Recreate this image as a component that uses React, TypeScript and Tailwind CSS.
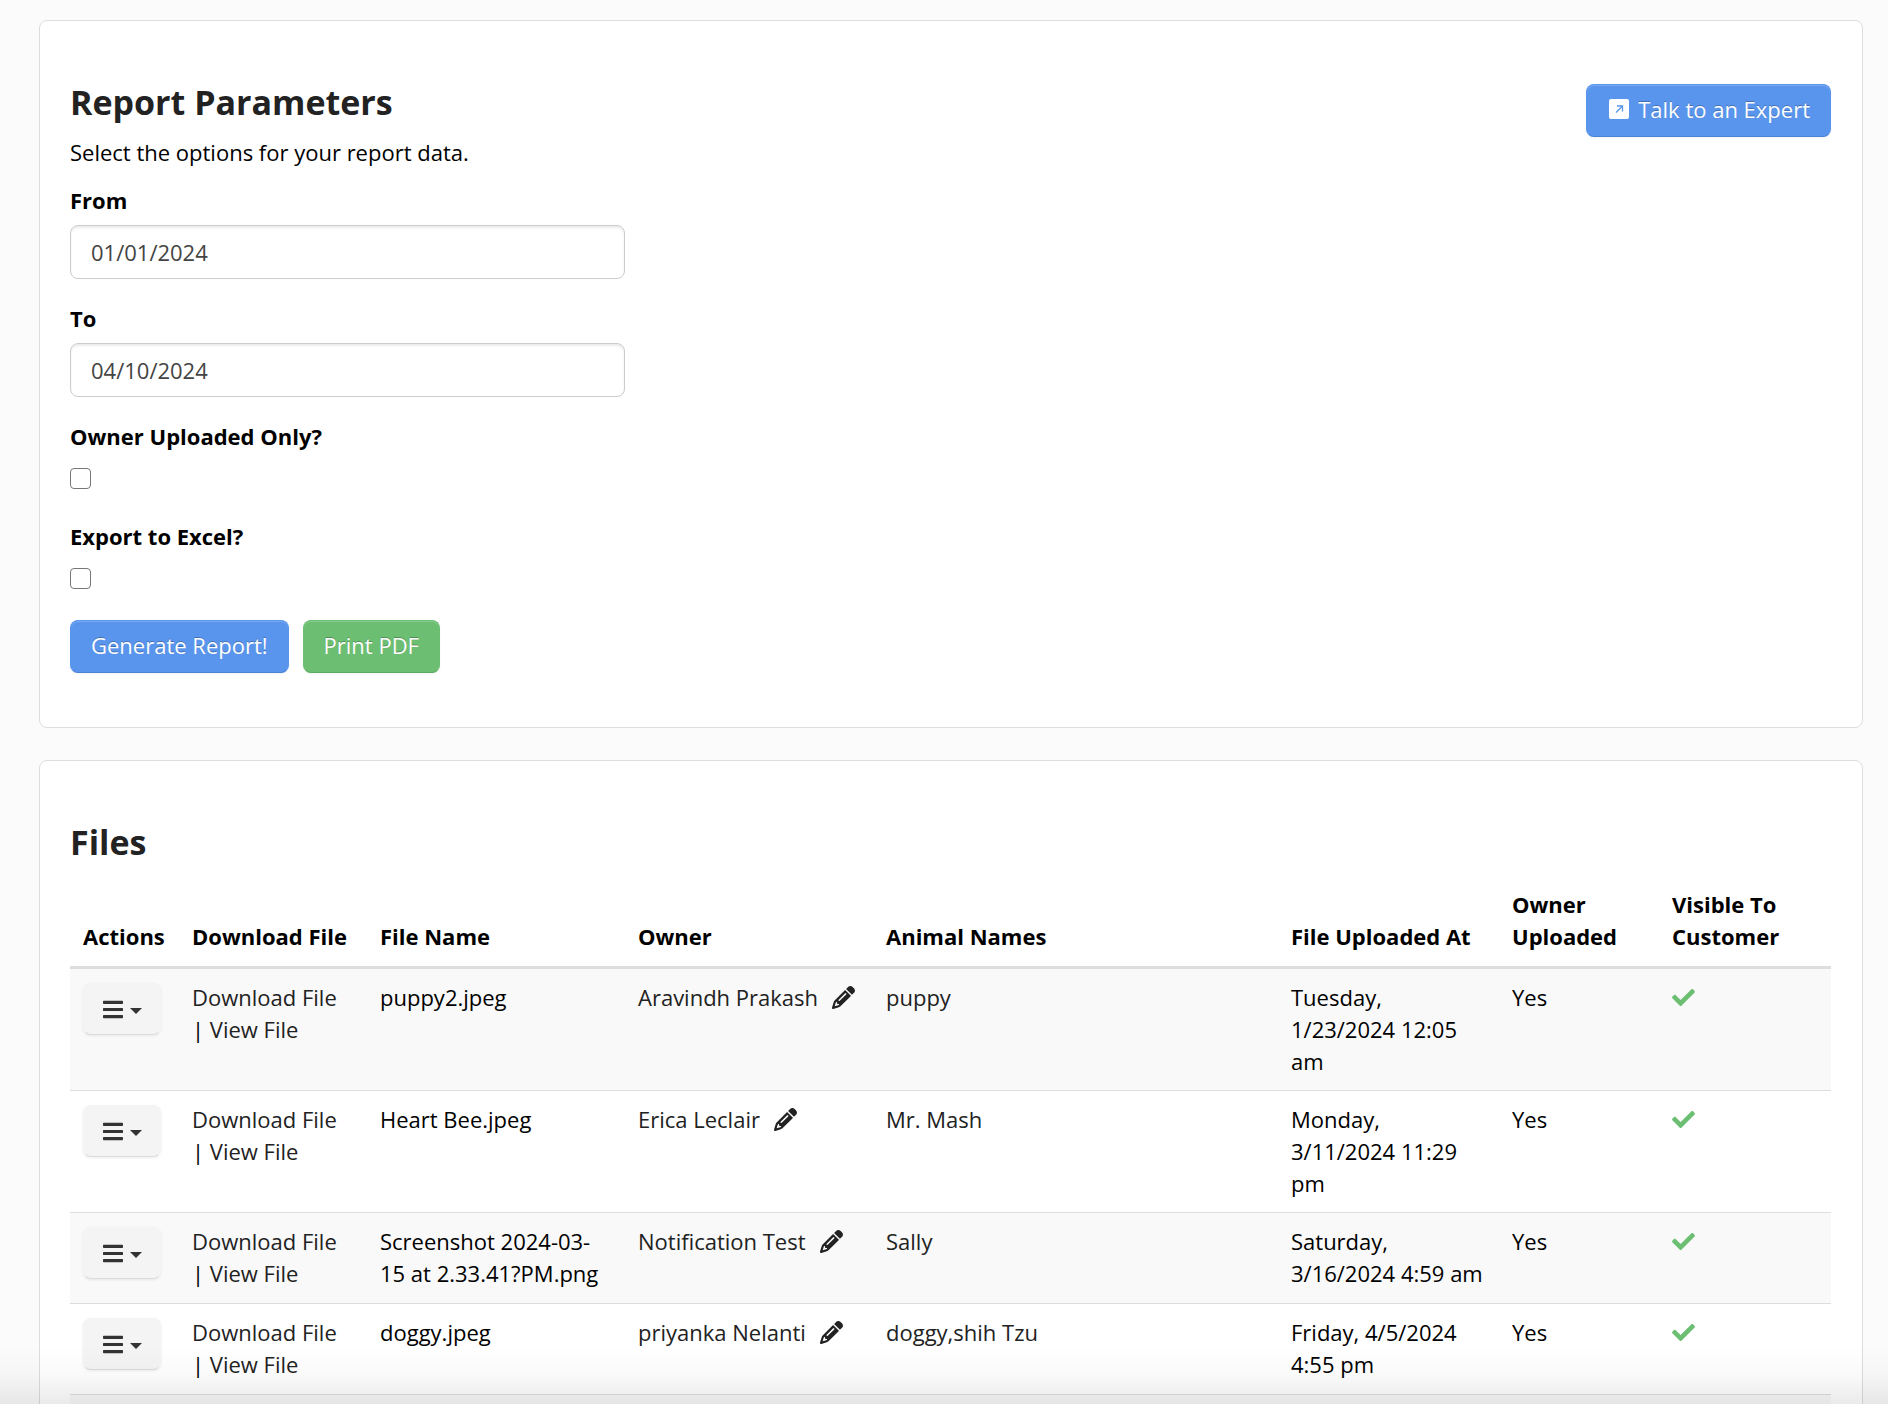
import React, { useState } from "react";
import { FaBars, FaCheck } from "react-icons/fa";
import { FaPencil } from "react-icons/fa6";

interface FileRow {
    name: string;
    owner: string;
    animals: string;
    uploadedAt: string;
    ownerUploaded: boolean;
}

const files: FileRow[] = [
    { name: "puppy2.jpeg", owner: "Aravindh Prakash", animals: "puppy", uploadedAt: "Tuesday, 1/23/2024 12:05 am", ownerUploaded: true },
    { name: "Heart Bee.jpeg", owner: "Erica Leclair", animals: "Mr. Mash", uploadedAt: "Monday, 3/11/2024 11:29 pm", ownerUploaded: true },
    { name: "Screenshot 2024-03-15 at 2.33.41?PM.png", owner: "Notification Test", animals: "Sally", uploadedAt: "Saturday, 3/16/2024 4:59 am", ownerUploaded: true },
    { name: "doggy.jpeg", owner: "priyanka Nelanti", animals: "doggy,shih Tzu", uploadedAt: "Friday, 4/5/2024 4:55 pm", ownerUploaded: true },
];

const cardClass = "rounded-lg border border-[#dddddd] bg-white pt-[61px] pr-[31px] pb-[54px] pl-[30px]";
const headingClass = "text-[34px] leading-[40px] font-bold text-[#222222]";
const buttonClass =
    "rounded-lg border px-5 pt-2 pb-[11px] text-white shadow-[inset_0_1px_0_rgba(255,255,255,0.2),0_1px_2px_rgba(0,0,0,0.05)] [text-shadow:0_-1px_0_rgba(0,0,0,0.25)]";
const blueButton = "border-[#5995ed] border-b-[#4a82d4] bg-[#5995ed]";
const greenButton = "border-[#6cbf72] border-b-[#59a95f] bg-[#6cbf72]";
const thClass = "border-b-[3px] border-[#dddddd] px-[13px] pt-3 pb-[14px] text-left align-bottom font-bold";
const tdClass = "border-b border-[#dddddd] px-[13px] pt-3 pb-[13px] align-top";

function DateField({ id, label, defaultValue }: { id: string; label: string; defaultValue: string }) {
    return (
        <div className="mb-[23px]">
            <label htmlFor={id} className="mb-[9px] block font-bold">{label}</label>
            <input
                id={id}
                type="text"
                defaultValue={defaultValue}
                className="block w-full max-w-[555px] rounded-lg border border-[#cccccc] bg-white px-5 py-[10px] text-[#444444] shadow-[inset_0_2px_2px_rgba(0,0,0,0.08)]"
            />
        </div>
    );
}

function CheckField({ id, label }: { id: string; label: string }) {
    const [checked, setChecked] = useState(false);

    return (
        <div className="mb-[31px]">
            <label htmlFor={id} className="mb-4 block font-bold">{label}</label>
            <input
                id={id}
                type="checkbox"
                checked={checked}
                onChange={(e) => setChecked(e.target.checked)}
                className="block size-[21px] appearance-none rounded border border-[#767676] bg-white checked:bg-[#5995ed]"
            />
        </div>
    );
}

function ExternalIcon() {
    return (
        <svg viewBox="0 0 20 20" className="size-5" aria-hidden="true">
            <rect width="20" height="20" rx="2" fill="#fff" />
            <path d="M8 7h5.5v5.5M13.5 7L7 13.5" fill="none" stroke="#5995ed" strokeWidth="1.3" />
        </svg>
    );
}

function ActionsButton() {
    return (
        <button
            type="button"
            aria-label="Actions"
            className="flex h-[52px] w-[78px] items-center gap-[7px] rounded-lg border border-[#f4f4f4] border-b-[#dcdcdc] bg-[#f4f4f4] pl-[19px] text-[#333333] shadow-[0_1px_3px_rgba(0,0,0,0.08)]"
        >
            <FaBars className="h-[23px] w-5" />
            <svg viewBox="0 0 12 6" className="mt-1 h-[6px] w-3" aria-hidden="true">
                <path d="M0 0h12L6 6z" fill="currentColor" />
            </svg>
        </button>
    );
}

export default function App() {
    return (
        <div className="relative h-screen overflow-hidden bg-[#fbfbfb] pt-5 pr-[25px] pl-[39px] font-['Open_Sans',sans-serif] text-[22px] leading-[32px] text-black">
            <section className={cardClass}>
                <div className="flex items-start justify-between">
                    <div>
                        <h2 className={`${headingClass} mb-[14px]`}>Report Parameters</h2>
                        <p className="mb-4">Select the options for your report data.</p>
                    </div>
                    <a href="#expert" className={`${buttonClass} ${blueButton} mt-[2px] flex items-center gap-[9px] pl-[22px]`}>
                        <ExternalIcon />
                        Talk to an Expert
                    </a>
                </div>

                <form onSubmit={(e) => e.preventDefault()}>
                    <DateField id="from" label="From" defaultValue="01/01/2024" />
                    <DateField id="to" label="To" defaultValue="04/10/2024" />
                    <CheckField id="owner-only" label="Owner Uploaded Only?" />
                    <CheckField id="excel" label="Export to Excel?" />
                    <div className="flex gap-[14px]">
                        <button type="submit" className={`${buttonClass} ${blueButton}`}>Generate Report!</button>
                        <button type="button" className={`${buttonClass} ${greenButton}`}>Print PDF</button>
                    </div>
                </form>
            </section>

            <section className={`${cardClass} mt-8`}>
                <h2 className={`${headingClass} mb-[14px]`}>Files</h2>
                <table className="w-full table-fixed border-separate border-spacing-0">
                    <colgroup>
                        <col className="w-[109px]" />
                        <col className="w-[188px]" />
                        <col className="w-[258px]" />
                        <col className="w-[248px]" />
                        <col />
                        <col className="w-[221px]" />
                        <col className="w-[160px]" />
                        <col className="w-[172px]" />
                    </colgroup>
                    <thead>
                        <tr>
                            <th className={thClass}>Actions</th>
                            <th className={`${thClass} whitespace-nowrap`}>Download File</th>
                            <th className={thClass}>File Name</th>
                            <th className={thClass}>Owner</th>
                            <th className={thClass}>Animal Names</th>
                            <th className={thClass}>File Uploaded At</th>
                            <th className={thClass}>Owner Uploaded</th>
                            <th className={thClass}>Visible To Customer</th>
                        </tr>
                    </thead>
                    <tbody>
                        {files.map((file) => (
                            <tr key={file.name} className="odd:bg-[#f9f9f9]">
                                <td className={tdClass}>
                                    <div className="h-[65px] pt-[2px]">
                                        <ActionsButton />
                                    </div>
                                </td>
                                <td className={tdClass}>
                                    <a href="#download" className="text-[#222222]">Download File</a> |{" "}
                                    <a href="#view" className="text-[#222222]">View File</a>
                                </td>
                                <td className={tdClass}>{file.name}</td>
                                <td className={`${tdClass} whitespace-nowrap`}>
                                    <a href="#owner" className="text-[#222222]">{file.owner}</a>
                                    <a href="#edit" aria-label="Edit owner" className="ml-[14px] inline-block text-[#222222]">
                                        <FaPencil className="inline size-[23px] align-[-3px]" />
                                    </a>
                                </td>
                                <td className={tdClass}>
                                    <a href="#animal" className="text-[#222222]">{file.animals}</a>
                                </td>
                                <td className={tdClass}>{file.uploadedAt}</td>
                                <td className={tdClass}>{file.ownerUploaded ? "Yes" : "No"}</td>
                                <td className={tdClass}>
                                    <FaCheck className="inline size-[23px] align-[-3px] text-[#6cbf72]" />
                                </td>
                            </tr>
                        ))}
                        <tr className="h-[91px] odd:bg-[#f9f9f9]">
                            <td colSpan={8} />
                        </tr>
                    </tbody>
                </table>
            </section>

            {/* shade along the bottom edge of the viewport */}
            <div className="pointer-events-none absolute inset-x-0 bottom-0 h-[60px] bg-linear-to-b from-black/0 via-black/2 to-black/8" />
        </div>
    );
}
